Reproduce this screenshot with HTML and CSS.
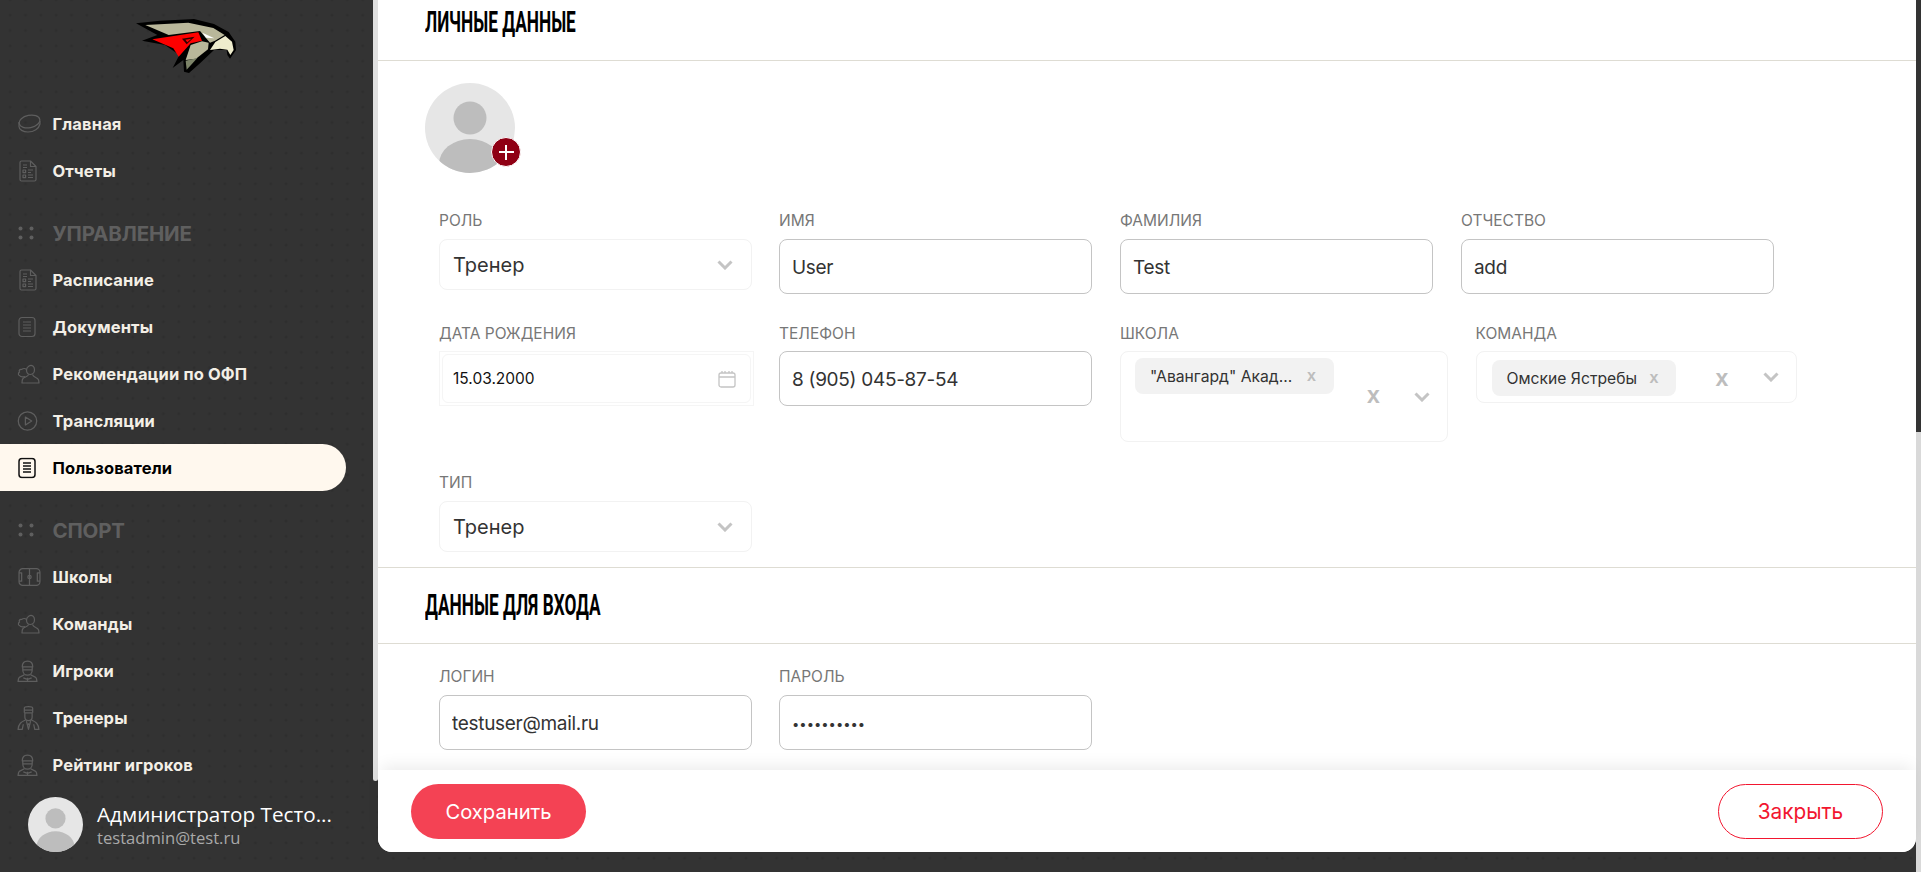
FILE: index.html
```html
<!DOCTYPE html>
<html lang="ru">
<head>
<meta charset="utf-8">
<title>Пользователи</title>
<link rel="stylesheet" href="styles.css">
</head>
<body>
<svg class="defs" width="0" height="0" aria-hidden="true">
  <symbol id="i-puck" viewBox="0 0 24 20"><ellipse cx="12.5" cy="7.5" rx="10.5" ry="6.2" transform="rotate(-12 12.5 7.5)"/><path d="M2 8v4.500c0 3 4 5.500 9 5.500 6 0 11-3.500 12-8V7"/></symbol>
  <symbol id="i-report" viewBox="0 0 18 22"><path d="M2.500 1h9l5.500 5.500v13a1.500 1.500 0 0 1-1.500 1.500h-13A1.500 1.500 0 0 1 1 19.500v-17A1.500 1.500 0 0 1 2.500 1z"/><path d="M11.500 1v5.500H17M4 5h4M4 7.500h4"/><rect x="4" y="10" width="2.600" height="2.600"/><rect x="4" y="15" width="2.600" height="2.600"/><path d="M9 10h5M9 12.500h3M9 15h5M9 17.500h5"/></symbol>
  <symbol id="i-doc" viewBox="0 0 18 21"><rect x="1" y="1" width="16" height="19" rx="3"/><path d="M5 5.500h8M5 8.500h8M5 11.500h8M5 14.500h8"/></symbol>
  <symbol id="i-team" viewBox="0 0 24 20"><path d="M13 2c3-1.500 5.500.5 5.500 3.500 0 2.500-1.500 5-4 5s-4-2-4-4.500c0-1.800 1-3.200 2.500-4z"/><path d="M10.500 5.500C9 4 7 4.500 5.500 5.500 4 5 2.500 6.500 3.500 8 2 9 2 11 3.500 11.500 4.500 13 7 13 9 12.500"/><path d="M12.500 10.500c0 2-4 2.500-5.500 4-1 1-1 2.500-1 4.500h17c0-2 0-3.500-1.500-4.500-1.500-1-4.500-1.800-5-4"/></symbol>
  <symbol id="i-play" viewBox="0 0 20 20"><circle cx="10" cy="10" r="8.800"/><path class="fill" d="M8 6.200l6 3.800-6 3.800z"/></symbol>
  <symbol id="i-field" viewBox="0 0 22 18"><rect x="1" y="1" width="20" height="16" rx="3.500"/><path d="M11 1v16M1 5h2.500v8H1M21 5h-2.500v8H21"/><circle cx="11" cy="9" r="1.600"/></symbol>
  <symbol id="i-player" viewBox="0 0 20 21"><path d="M5 6.500C5 3 7 1 10 1s5 2 5 5.500M4.500 6.500h11M5.500 6.500v3c0 3 2 5 4.500 5s4.500-2 4.500-5v-3M6 9.500h8"/><path d="M7 14c-1 1.500-5 1.500-5.500 3.500L1 20.500h18l-.5-3C18 15.500 14 15.500 13 14M10 17v3.500M6 17l4 1.500 4-1.500"/></symbol>
  <symbol id="i-coach" viewBox="0 0 22 24"><path d="M7 7V2.500C7 1.500 8 1 11 1s4 .5 4 1.500V7M7 4.500h8M7 7h8M7.500 7v4c0 2 1.500 3.500 3.500 3.500s3.500-1.500 3.500-3.500V7"/><path d="M8 14C5 15.500 1.500 16.500 1 23h4l1-5M14 14c3 1.500 6.500 2.500 7 9h-4l-1-5M9 15l2 8 2-8M11 17v2"/></symbol>
  <symbol id="i-user" viewBox="0 0 90 90"><rect width="90" height="90" fill="#e6e6e6"/><circle cx="45" cy="35" r="16.500" fill="#bdbdbd"/><ellipse cx="45" cy="81" rx="31" ry="25" fill="#bdbdbd"/></symbol>
  <symbol id="i-chev" viewBox="0 0 16 10"><path d="M1.500 1.500L8 8l6.500-6.500"/></symbol>
  <symbol id="i-dots" viewBox="0 0 16 14"><circle cx="2.500" cy="2.500" r="2"/><circle cx="13.500" cy="2.500" r="2"/><circle cx="2.500" cy="11.500" r="2"/><circle cx="13.500" cy="11.500" r="2"/></symbol>
</svg>

<div class="shell">
  <aside class="sidebar">
    <div class="logo">
      <svg width="130" height="90" viewBox="0 0 390 270">
        <path fill="#000" d="M48 70L120 62 210 58 222 57 282 72 326 96 346 125 348 150 330 176 322 165 320 150 282 150 240 190 207 219 192 215 190 180 158 204 178 165 135 135 66 122 112 105z"/>
        <path fill="#b9b79a" d="M76 75L205 68 280 84 314 105 285 122 270 128 240 93 146 105z"/>
        <path fill="#fe0000" d="M97 118L235 97 246 122 212 130 176 170 160 145z"/>
        <path fill="#2a0000" d="M186 116L224 110 200 133z"/>
        <path fill="#fe0000" d="M196 119L214 116 202 127z"/>
        <path fill="#fff" d="M247 98L283 115 258 113z"/>
        <path fill="#b9b79a" d="M212 135L246 124 266 128 264 148 228 176 197 180z"/>
        <path fill="#7d8469" d="M197 182L232 174 200 209z"/>
        <path fill="#eeeccd" d="M270 150L286 126 316 108 336 125 341 150 331 165 322 149 300 146z"/>
      </svg>
    </div>
    <nav class="nav">
      <a class="item"><svg class="ico ico-puck"><use href="#i-puck"/></svg><span>Главная</span></a>
      <a class="item"><svg class="ico ico-report"><use href="#i-report"/></svg><span>Отчеты</span></a>
      <div class="group"><svg class="dots"><use href="#i-dots"/></svg><span>УПРАВЛЕНИЕ</span></div>
      <a class="item"><svg class="ico ico-report"><use href="#i-report"/></svg><span>Расписание</span></a>
      <a class="item"><svg class="ico ico-doc"><use href="#i-doc"/></svg><span>Документы</span></a>
      <a class="item"><svg class="ico ico-team"><use href="#i-team"/></svg><span>Рекомендации по ОФП</span></a>
      <a class="item"><svg class="ico ico-play"><use href="#i-play"/></svg><span>Трансляции</span></a>
      <a class="item active"><svg class="ico ico-doc"><use href="#i-doc"/></svg><span>Пользователи</span></a>
      <div class="group"><svg class="dots"><use href="#i-dots"/></svg><span>СПОРТ</span></div>
      <a class="item"><svg class="ico ico-field"><use href="#i-field"/></svg><span>Школы</span></a>
      <a class="item"><svg class="ico ico-team"><use href="#i-team"/></svg><span>Команды</span></a>
      <a class="item"><svg class="ico ico-player"><use href="#i-player"/></svg><span>Игроки</span></a>
      <a class="item"><svg class="ico ico-coach"><use href="#i-coach"/></svg><span>Тренеры</span></a>
      <a class="item"><svg class="ico ico-player"><use href="#i-player"/></svg><span>Рейтинг игроков</span></a>
    </nav>
    <div class="me">
      <svg class="me-ava"><use href="#i-user"/></svg>
      <div class="me-text">
        <div class="me-name">Администратор Тесто...</div>
        <div class="me-mail">testadmin@test.ru</div>
      </div>
    </div>
  </aside>

  <div class="thumb-left"></div>

  <main class="panel">
    <div class="scroll">
      <div class="scroll-inner">
        <header class="head"><h2 class="title">Личные данные</h2></header>
        <div class="body-top">
          <div class="photo">
            <svg class="photo-img"><use href="#i-user"/></svg>
            <span class="plus"></span>
          </div>
          <div class="row row-1">
            <div class="field"><label>РОЛЬ</label><div class="select"><span>Тренер</span><svg class="chev"><use href="#i-chev"/></svg></div></div>
            <div class="field"><label>ИМЯ</label><input class="input" value="User"></div>
            <div class="field"><label>ФАМИЛИЯ</label><input class="input" value="Test"></div>
            <div class="field"><label>ОТЧЕСТВО</label><input class="input" value="add"></div>
          </div>
          <div class="row row-2">
            <div class="field field-date"><label>ДАТА РОЖДЕНИЯ</label>
              <div class="date"><div class="date-in"><span>15.03.2000</span>
                <svg class="cal" viewBox="0 0 18 18"><rect x="1" y="3" width="16" height="14" rx="2"/><path d="M1 7h16M4 1v2M7 1v2M11 1v2M14 1v2"/></svg>
              </div></div>
            </div>
            <div class="field"><label>ТЕЛЕФОН</label><input class="input" value="8 (905) 045-87-54"></div>
            <div class="field field-school"><label>ШКОЛА</label>
              <div class="multi multi-tall"><span class="chip chip-school"><span class="chip-t">"Авангард" Акад...</span><b class="chip-x">x</b></span>
                <b class="clear">x</b><svg class="chev"><use href="#i-chev"/></svg></div>
            </div>
            <div class="field field-team"><label>КОМАНДА</label>
              <div class="multi"><span class="chip chip-team"><span class="chip-t">Омские Ястребы</span><b class="chip-x">x</b></span>
                <b class="clear">x</b><svg class="chev"><use href="#i-chev"/></svg></div>
            </div>
          </div>
          <div class="row row-3">
            <div class="field"><label>ТИП</label><div class="select"><span>Тренер</span><svg class="chev"><use href="#i-chev"/></svg></div></div>
          </div>
        </div>
        <header class="head head-2"><h2 class="title">Данные для входа</h2></header>
        <div class="body-bottom">
          <div class="row">
            <div class="field"><label>ЛОГИН</label><input class="input" value="testuser@mail.ru"></div>
            <div class="field"><label>ПАРОЛЬ</label><input class="input" type="password" value="1234567890"></div>
          </div>
        </div>
      </div>
    </div>
    <footer class="foot">
      <button class="btn btn-save">Сохранить</button>
      <button class="btn btn-close">Закрыть</button>
    </footer>
  </main>

  <div class="thumb-right"></div>
</div>
</body>
</html>
```

FILE: styles.css
```css
* { box-sizing: border-box; }
html, body { margin: 0; height: 872px; overflow: hidden; }
body {
  width: 1921px;
  background-color: #333;
  background-image: radial-gradient(circle, #2e2e2e 1.2px, transparent 1.7px);
  background-size: 15.33px 15.33px;
  background-position: 2.5px 7.5px;
  font-family: "Inter", "Noto Sans", sans-serif;
}
.defs { position: absolute; }
.shell { display: flex; height: 872px; }

/* sidebar */
.sidebar { width: 373px; flex: none; display: flex; flex-direction: column; }
.logo { height: 100.5px; padding-left: 120px; }
.logo svg { display: block; }
.nav { display: flex; flex-direction: column; }
.item {
  height: 46.9px; display: flex; align-items: center; padding-left: 52.5px; position: relative;
  color: #f3efe6; font-size: 16.5px; font-weight: 700; letter-spacing: .14px;
  width: 346px;
}
.item.active { background: #fff8ee; color: #000; border-radius: 0 24px 24px 0; }
.ico {
  position: absolute; left: 17px; top: 50%; transform: translateY(-50%);
  fill: none; stroke: #5e5e5e; stroke-width: 1.200;
}
.ico .fill, .ico use { stroke-linejoin: round; }
.ico-puck { width: 24px; height: 20px; left: 17px; }
.ico-report { width: 18px; height: 22px; left: 18.500px; }
.ico-doc { width: 18px; height: 21px; left: 17.500px; }
.ico-team { width: 24px; height: 20px; left: 16px; }
.ico-play { width: 21px; height: 21px; left: 16.500px; }
.ico-field { width: 23px; height: 19px; left: 17.500px; }
.ico-player { width: 21px; height: 22px; left: 17px; }
.ico-coach { width: 23px; height: 25px; left: 17px; }
.active .ico { stroke: #111; stroke-width: 1.500; }
.group {
  height: 46.9px; margin-top: 15.500px; display: flex; align-items: center; padding-left: 52.5px; position: relative;
  color: #5f5f5f; font-size: 20.5px; font-weight: 700; letter-spacing: -.2px;
}
.dots {
  position: absolute; left: 18px; top: 50%; width: 16px; height: 14px; margin-top: -7px;
  fill: #5f5f5f;
}
.me { position: absolute; left: 28px; top: 797px; display: flex; gap: 14px; }
.me-ava { width: 55px; height: 55px; border-radius: 50%; flex: none; }
.me-name { color: #fff; font-family: "Open Sans", sans-serif; font-size: 20.7px; line-height: 26px; margin-top: 4px; white-space: nowrap; }
.me-mail { color: #a9a9a9; font-family: "Open Sans", sans-serif; font-size: 16.6px; line-height: 22px; white-space: nowrap; }

/* scrollbars */
.thumb-left { width: 5px; height: 781px; background: #e0e0e0; border-radius: 0 0 3px 3px; flex: none; }
.thumb-right { width: 5px; height: 440px; margin-top: 432px; background: #d9d9d9; flex: none; }

/* panel */
.panel { width: 1538px; height: 852px; flex: none; display: flex; flex-direction: column; border-radius: 0 0 14px 14px; background: #fff; position: relative; }
.scroll { height: 770px; overflow: hidden; flex: none; }
.scroll-inner { margin-top: -15px; }
.head { height: 76px; border-bottom: 1px solid #dedcd3; padding: 17px 0 0 47px; }
.head-2 { border-top: 1px solid #dedcd3; height: 77px; }
.title {
  margin: 0; font-family: "Liberation Sans Narrow", "Roboto", sans-serif; font-weight: 700;
  font-size: 29px; line-height: 40px; color: #000; text-transform: uppercase;
  display: inline-block; transform: scaleX(.595); transform-origin: left center; white-space: nowrap;
}
.body-top { padding: 22px 0 15px 61px; }
.photo { position: relative; width: 90px; height: 90px; margin: 0 0 37px -14px; }
.photo-img { width: 90px; height: 90px; border-radius: 50%; display: block; }
.plus {
  position: absolute; left: 66px; top: 54px; width: 30px; height: 30px; border-radius: 50%;
  background:
    linear-gradient(#fff, #fff) center / 15px 2px no-repeat,
    linear-gradient(#fff, #fff) center / 2px 15px no-repeat,
    #8f0014;
  border: 1px solid #fff;
}
.row { display: flex; }
.row-2 { margin-top: 29px; }
.row-3 { margin-top: 30.500px; }
.field { width: 313px; margin-right: 28px; flex: none; }
.row-1 .field:first-child, .body-bottom .field:first-child { margin-right: 27px; }
.field label { display: block; height: 19px; line-height: 21px; margin-bottom: 10px; color: #777; font-size: 15.5px; }
.row-2 .field label { margin-bottom: 9px; }
.field-date { margin-right: 25px; width: 315px; }
.field-school { width: 327.500px; }
.field-team { width: 321px; margin-right: 0; }

.select, .multi {
  border: 1px solid #f2f2f2; border-radius: 8px; background: #fff; display: flex; align-items: center; color: #333;
}
.select { height: 51px; padding: 0 18px 0 13px; justify-content: space-between; font-size: 20px; }
.chev { width: 16px; height: 10px; fill: none; stroke: #c4c4c4; stroke-width: 3; flex: none; }
.input {
  display: block; width: 100%; height: 55px; border: 1px solid #c4c4c4; border-radius: 8px; outline: 0;
  padding: 2px 12px 0; font: 400 19px "Inter", sans-serif; letter-spacing: -.3px; color: #333; background: #fff;
}
.input[type=password] { font-size: 13px; letter-spacing: 0; }
.date { height: 55px; border: 1px solid #f5f5f5; padding: 2px; }
.date-in { height: 100%; border: 1px solid #f5f5f5; border-radius: 6px; display: flex; align-items: center; justify-content: space-between; padding: 0 14px 0 10px; font-size: 15.5px; color: #111; }
.cal { width: 18px; height: 18px; fill: none; stroke: #c4c4c4; stroke-width: 1.300; }
.multi { height: 51.500px; position: relative; padding: 8px 0 0 15px; align-items: flex-start; font-size: 15.7px; color: #333; }
.multi-tall { height: 90.500px; padding: 6px 0 0 14px; }
.chip { display: flex; align-items: center; background: #f2f2f2; border-radius: 8px; height: 36px; padding: 0 18px 0 15px; justify-content: space-between; white-space: nowrap; }
.chip-school { width: 199px; }
.chip-team { width: 184px; padding-left: 15px; padding-right: 17px; }
.chip-x { font-weight: 700; font-size: 16px; color: #bdbdbd; line-height: 1; font-family: "Liberation Sans", sans-serif; }
.clear { position: absolute; font: 700 23px/1 "Liberation Sans", sans-serif; color: #bdbdbd; }
.multi .chev { position: absolute; }
.multi .clear { left: 239px; top: 15px; }
.multi .chev { right: 17px; top: 20px; }
.multi-tall .clear { left: 246px; top: 32px; }
.multi-tall .chev { right: 17px; top: 40px; }
.body-bottom { padding: 22px 0 0 61px; }

/* footer */
.foot {
  height: 82px; flex: none; background: #fff; border-radius: 0 0 14px 14px; display: flex; justify-content: space-between;
  padding: 14px 33px 0 33px; position: relative; box-shadow: 0 -8px 16px -4px rgba(0,0,0,.08);
}
.btn { height: 55px; border-radius: 28px; background: #fff; padding: 0; font-family: "Inter", sans-serif; font-weight: 400; }
.btn-save { width: 175px; background: #f44254; border: 0; color: #fff; font-size: 20.2px; }
.btn-close { width: 165px; border: 1px solid #f2162f; color: #f2162f; font-size: 20.8px; }
```
